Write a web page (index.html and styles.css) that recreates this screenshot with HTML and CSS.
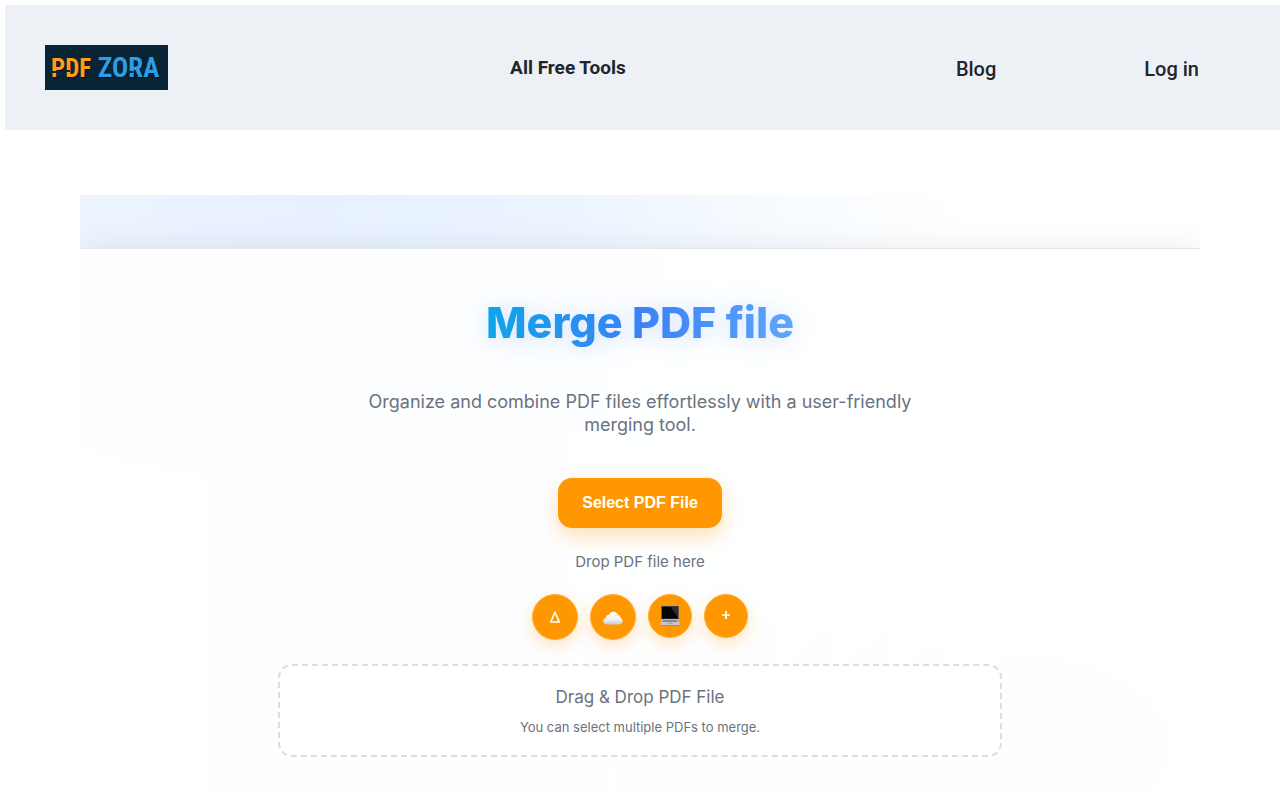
FILE: index.html
```html
<!DOCTYPE html>
<html lang="en">
<head>
    <meta charset="UTF-8">
    <meta name="viewport" content="width=device-width, initial-scale=1.0">
    <title>Merge PDF file - PDF Zora</title>
    <link rel="stylesheet" href="styles.css">
</head>
<body>

<header class="site-header">
    <a class="logo" href="#" aria-label="PDF Zora home">
        <svg width="123" height="45" viewBox="0 0 123 45">
            <rect width="123" height="45" fill="#092435"/>
            <g class="logo-shadow">
                <text x="7" y="33">PDF</text>
                <text class="logo-zora" x="54" y="33">ZORA</text>
            </g>
            <text class="logo-pdf" x="6" y="32">PDF</text>
            <text class="logo-zora" x="53" y="32">ZORA</text>
            <!-- stencil cuts -->
            <path d="M6 26h7v2H6zM20 25h5v2h-5zM82 26h6v2h-6zM97 21l5 0-3 5h-4z" fill="#092435"/>
        </svg>
    </a>
    <a class="tools-link" href="#">All Free Tools</a>
    <nav class="nav-links">
        <a href="#">Blog</a>
        <a href="#">Log in</a>
    </nav>
</header>

<main class="hero">
    <section class="merge-panel">
        <h1>Merge PDF file</h1>
        <p class="subtitle">Organize and combine PDF files effortlessly with a user-friendly merging tool.</p>
        <button class="select-btn" type="button">Select PDF File</button>
        <p class="drop-hint">Drop PDF file here</p>

        <div class="sources">
            <button class="source-btn large" type="button" aria-label="Google Drive">
                <svg width="12" height="14" viewBox="0 0 12 14">
                    <path d="M6 2.2L10.3 12H1.7z" fill="none" stroke="#fff" stroke-width="1.6" stroke-linejoin="round"/>
                </svg>
            </button>
            <button class="source-btn large" type="button" aria-label="Cloud storage">
                <svg width="20" height="20" viewBox="0 0 20 20">
                    <defs>
                        <linearGradient id="cloud" x1="0" y1="0" x2="0" y2="1">
                            <stop offset="0" stop-color="#ffffff"/>
                            <stop offset=".6" stop-color="#f1f3f5"/>
                            <stop offset="1" stop-color="#c3cbd3"/>
                        </linearGradient>
                    </defs>
                    <path d="M4.500 17.500C2 17.500.3 16.200.3 14.200c0-1.700 1-2.900 2.500-3.300C3 9 4.300 7.800 6 7.800 6.800 5.900 8.500 4.700 10.500 4.700c2.200 0 3.900 1.300 4.300 3.400 1.600 0 2.700 1.200 2.700 2.800 1.300.4 2.200 1.600 2.200 3.100 0 2.200-1.600 3.500-4 3.500z" fill="url(#cloud)"/>
                    <path d="M2.800 10.900c1.300-.2 2.500.2 3.200 1.100M14.800 8.100c-1.400-.2-2.600.4-3.300 1.500" fill="none" stroke="#d5dae0" stroke-width=".7"/>
                </svg>
            </button>
            <button class="source-btn" type="button" aria-label="My computer">
                <svg width="20" height="20" viewBox="0 0 20 20">
                    <path d="M1.200 0h17.600v13.300H1.200z" fill="#5c5f63"/>
                    <path d="M1.900.7h16.200v12H1.900z" fill="#050505"/>
                    <path d="M10.500.7h7.600v11z" fill="#2b2d31"/>
                    <path d="M1.600 13.300h16.800l1.600 5.700H0z" fill="#c3c6c9"/>
                    <path d="M2.900 13.900h14.200l.6 2H2.300z" fill="#85898d"/>
                    <path d="M7.600 16.500h4.800l.3 1.500H7.300z" fill="#a6aaae"/>
                    <path d="M0 19h20v.8H0z" fill="#8d9195"/>
                </svg>
            </button>
            <button class="source-btn" type="button" aria-label="More">
                <svg width="10" height="12" viewBox="0 0 10 12">
                    <path d="M5 1v8M1 5h8" stroke="#fff" stroke-width="1.700"/>
                </svg>
            </button>
        </div>

        <div class="drop-zone">
            <p class="drop-title">Drag &amp; Drop PDF File</p>
            <p class="drop-note">You can select multiple PDFs to merge.</p>
        </div>
    </section>
</main>

</body>
</html>
```
FILE: styles.css
```css
* {
    box-sizing: border-box;
}
body {
    font-family: Inter, "Liberation Sans", sans-serif;
    background-color: #fff;
    color: #6b7280;
    margin: 0;
    padding: 5px 0 0 5px;
}
h1, p {
    margin: 0;
}
a {
    color: #212529;
    text-decoration: none;
}
button {
    border: none;
    padding: 0;
    cursor: pointer;
}

/* header */
.site-header {
    display: flex;
    align-items: center;
    justify-content: space-between;
    padding: 40px 81px 40px 40px;
    background-color: #edf1f6;
    font-family: Roboto, sans-serif;
}
.logo svg {
    display: block;
}
.logo text {
    font-family: "Liberation Sans Narrow", "Roboto Condensed", "DejaVu Sans Condensed", sans-serif;
    font-size: 25px;
    font-weight: bold;
}
.logo .logo-zora {
    font-size: 27px;
}
.logo-pdf {
    fill: #ff9d14;
}
.logo-zora {
    fill: #2b9fe6;
}
.logo-shadow text {
    fill: #041019;
}
.tools-link {
    margin-left: 12px;
    font-size: 19px;
    font-weight: 700;
}
.nav-links {
    display: flex;
    gap: 148px;
    padding-top: 2px;
    font-size: 20px;
    font-weight: 500;
}

/* hero */
.hero {
    margin: 65px 80px 0 75px;
    padding-top: 53px;
    background:
        radial-gradient(500px 300px at 20% 2%, rgba(99, 102, 241, 0.05), transparent),
        radial-gradient(500px 320px at 85% 92%, rgba(255, 153, 0, 0.10), transparent),
        linear-gradient(90deg, #f0f8ff, #eef7ff 40%, #fff 80%);
    overflow: hidden;
}
.merge-panel {
    display: flex;
    flex-direction: column;
    align-items: center;
    padding: 46px 24px 36px;
    border-top: 1px solid #e5e7eb;
    background-color: rgba(255, 255, 255, 0.88);
    box-shadow: 0 0 30px rgba(0, 0, 0, 0.08);
    text-align: center;
}
.merge-panel h1 {
    font-size: 43px;
    font-weight: 800;
    line-height: 54px;
    color: transparent;
    background: linear-gradient(90deg, #0ea5e9, #3b82f6 50%, #60a5fa);
    -webkit-background-clip: text;
    background-clip: text;
    filter: drop-shadow(0 2px 12px rgba(59, 130, 246, 0.25));
}
.subtitle {
    max-width: 600px;
    margin-top: 41px;
    font-size: 18px;
    line-height: 23px;
}
.select-btn {
    margin-top: 42px;
    width: 164px;
    height: 50px;
    border-radius: 14px;
    background-color: #ff9800;
    box-shadow: 0 8px 20px rgba(255, 152, 0, 0.3);
    color: #fff;
    font-family: "Liberation Sans", Arial, sans-serif;
    font-size: 16px;
    font-weight: bold;
}
.drop-hint {
    margin-top: 24px;
    font-size: 15px;
    line-height: 20px;
}
.sources {
    display: flex;
    align-items: flex-start;
    gap: 12px;
    margin-top: 22px;
}
.source-btn {
    display: flex;
    align-items: center;
    justify-content: center;
    width: 44px;
    height: 44px;
    border: 1px solid #ffad33;
    border-radius: 50%;
    background-color: #ff9800;
    box-shadow: 0 6px 16px rgba(255, 152, 0, 0.25);
}
.source-btn.large {
    width: 46px;
    height: 46px;
}
.drop-zone {
    width: 100%;
    max-width: 724px;
    margin-top: 24px;
    padding: 19px;
    border: 2px dashed #ddd;
    border-radius: 14px;
    background-color: #fff;
}
.drop-title {
    font-size: 17px;
    line-height: 24px;
}
.drop-note {
    margin-top: 9px;
    font-size: 13px;
    line-height: 18px;
}
```
